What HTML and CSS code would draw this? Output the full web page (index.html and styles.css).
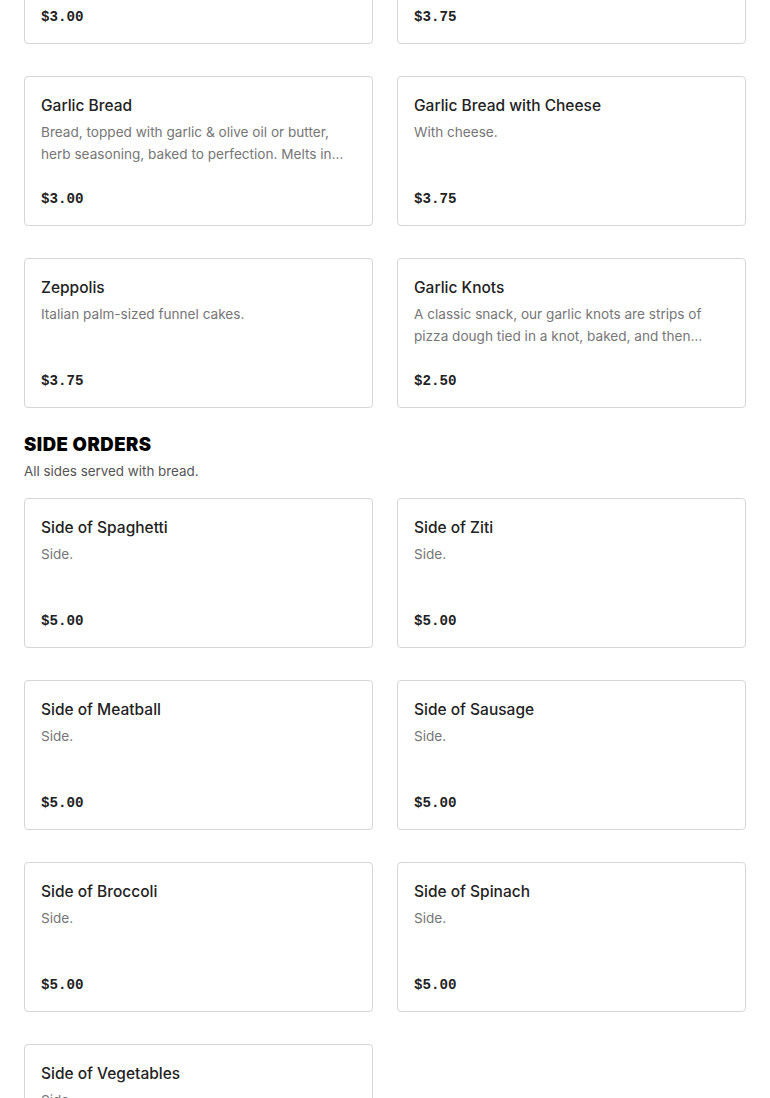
FILE: index.html
```html
<!DOCTYPE html>
<html lang="en">
<head>
<meta charset="utf-8">
<title>Menu</title>
<link rel="stylesheet" href="styles.css">
</head>
<body>
<main class="menu">
  <section class="section section-first">
    <div class="grid">
      <article class="card"><h3 class="title">Calzone</h3><p class="desc">Ricotta and mozzarella.</p><div class="price">$3.00</div></article>
      <article class="card"><h3 class="title">Calzone with Cheese</h3><p class="desc">With cheese.</p><div class="price">$3.75</div></article>
      <article class="card"><h3 class="title">Garlic Bread</h3><p class="desc">Bread, topped with garlic &amp; olive oil or butter, herb seasoning, baked to perfection. Melts in your mouth.</p><div class="price">$3.00</div></article>
      <article class="card"><h3 class="title">Garlic Bread with Cheese</h3><p class="desc">With cheese.</p><div class="price">$3.75</div></article>
      <article class="card"><h3 class="title">Zeppolis</h3><p class="desc">Italian palm-sized funnel cakes.</p><div class="price">$3.75</div></article>
      <article class="card"><h3 class="title">Garlic Knots</h3><p class="desc">A classic snack, our garlic knots are strips of pizza dough tied in a knot, baked, and then topped with garlic butter.</p><div class="price">$2.50</div></article>
    </div>
  </section>
  <section class="section">
    <h2 class="section-title">SIDE ORDERS</h2>
    <p class="section-sub">All sides served with bread.</p>
    <div class="grid">
      <article class="card"><h3 class="title">Side of Spaghetti</h3><p class="desc">Side.</p><div class="price">$5.00</div></article>
      <article class="card"><h3 class="title">Side of Ziti</h3><p class="desc">Side.</p><div class="price">$5.00</div></article>
      <article class="card"><h3 class="title">Side of Meatball</h3><p class="desc">Side.</p><div class="price">$5.00</div></article>
      <article class="card"><h3 class="title">Side of Sausage</h3><p class="desc">Side.</p><div class="price">$5.00</div></article>
      <article class="card"><h3 class="title">Side of Broccoli</h3><p class="desc">Side.</p><div class="price">$5.00</div></article>
      <article class="card"><h3 class="title">Side of Spinach</h3><p class="desc">Side.</p><div class="price">$5.00</div></article>
      <article class="card"><h3 class="title">Side of Vegetables</h3><p class="desc">Side.</p><div class="price">$5.00</div></article>
    </div>
  </section>
</main>
</body>
</html>
```
FILE: styles.css
```css
* { box-sizing: border-box; }
html, body { margin: 0; padding: 0; background: #fff; }
body {
  font-family: Inter, "Noto Sans", sans-serif;
  color: #222;
  overflow: hidden;
}
.menu { padding: 0 24px; }
.section { margin-top: 24px; }
.section-first.section { margin-top: -106px; }
.grid {
  display: grid;
  grid-template-columns: 1fr 1fr;
  column-gap: 24px;
  row-gap: 32px;
}
.card {
  border: 1px solid #d6d6d6;
  border-radius: 4px;
  padding: 16px;
  height: 150px;
  display: flex;
  flex-direction: column;
}
.title {
  margin: 1px 0 0;
  font-size: 15.5px;
  line-height: 24px;
  font-weight: 500;
  color: #222;
}
.desc {
  margin: 3px 0 0;
  font-size: 13.6px;
  line-height: 22px;
  color: #767676;
  height: 44px;
  overflow: hidden;
  display: -webkit-box;
  -webkit-line-clamp: 2;
  -webkit-box-orient: vertical;
}
.price {
  margin-top: 24px;
  font-family: "Liberation Mono", "DejaVu Sans Mono", monospace;
  font-weight: 700;
  font-size: 14.2px;
  line-height: 20px;
  color: #222;
}
.section-title {
  margin: 0;
  font-size: 18.5px;
  line-height: 24px;
  font-weight: 900;
  letter-spacing: 0.5px;
  color: #000;
}
.section-sub {
  margin: 4px 0 16px;
  font-size: 13.4px;
  line-height: 22px;
  color: #555;
}
```
